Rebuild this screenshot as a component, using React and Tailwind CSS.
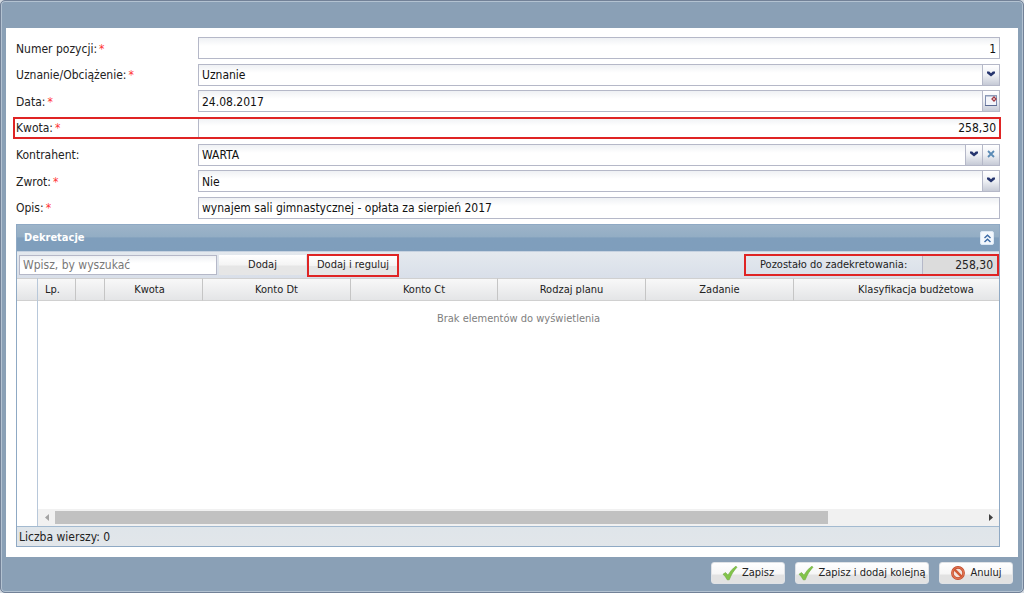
import React, { useState } from 'react';

const columns = [
  { label: 'Lp.', width: 'w-[38px]', padding: 'pr-2' },
  { label: '', width: 'w-[29px]', padding: 'p-0' },
  { label: 'Kwota', width: 'w-[98px]', padding: 'pr-2' },
  { label: 'Konto Dt', width: 'w-[148px]', padding: 'p-0' },
  { label: 'Konto Ct', width: 'w-[147px]', padding: 'p-0' },
  { label: 'Rodzaj planu', width: 'w-[148px]', padding: 'p-0' },
  { label: 'Zadanie', width: 'w-[148px]', padding: 'p-0' },
  { label: 'Klasyfikacja budżetowa', width: 'w-[245px]', padding: 'p-0' },
];

const ChevronIcon = () => (
  <svg width="8" height="6" viewBox="0 0 8 6" className="block">
    <path d="M0 0.500h2.200L4 2.200 5.800 0.500H8v1.700L4 5.500 0 2.200z" fill="#26356e" />
  </svg>
);

const ClearIcon = () => (
  <svg width="8" height="8" viewBox="0 0 8 8" className="block">
    <path d="M1 1l6 6M7 1L1 7" stroke="#5b8bb5" strokeWidth="1.8" />
  </svg>
);

const CalendarIcon = () => (
  <svg width="14" height="13" viewBox="0 0 14 13" className="block">
    <rect x="1.5" y="1.5" width="11" height="10" fill="#f4f5fa" stroke="#7f8db0" />
    <path d="M1 1h12v1.500H1z" fill="#8d9bb9" />
    <path d="M1 11.5h12" stroke="#5c6b93" />
    <path d="M10 3l2 2-2 2-2-2z" fill="#fff" stroke="#a33a44" strokeWidth="1.3" />
  </svg>
);

const CheckIcon = () => (
  <svg width="16" height="16" viewBox="0 0 16 16" className="block">
    <path
      d="M1 9.200L3.600 7.600 6 10.200C8 6.600 10.600 3.400 14 1.200L15 2.200C11.800 5.600 9.200 9.600 7.200 14.800H5.200C4.200 12.600 2.800 10.800 1 9.200z"
      fill="#82c44a"
      stroke="#69a838"
      strokeWidth="0.6"
    />
  </svg>
);

const CancelIcon = () => (
  <svg width="16" height="16" viewBox="0 0 16 16" className="block">
    <circle cx="8" cy="8" r="5.6" fill="#f3e4dd" stroke="#c0492a" strokeWidth="2.6" />
    <circle cx="8" cy="8" r="5.6" fill="none" stroke="#e07350" strokeWidth="1.4" />
    <path d="M4.200 4.200l7.600 7.600" stroke="#d05a35" strokeWidth="2.4" />
  </svg>
);

const CollapseIcon = () => (
  <svg width="9" height="9" viewBox="0 0 9 9" className="block">
    <path d="M1.500 4l3-2.800 3 2.800M1.500 8l3-2.800 3 2.800" fill="none" stroke="#3a6aa6" strokeWidth="1.400" />
  </svg>
);

const inputClass = 'min-w-0 flex-1 self-stretch appearance-none bg-transparent px-[3px] pt-px text-[#111] outline-none';
const triggerClass =
  'flex w-[17px] shrink-0 items-center justify-center self-stretch border-l border-[#b5b8c8] bg-linear-to-b from-white via-[#eef0f4] to-[#c6cad6] pb-[2px]';
const toolbarButtonClass =
  'bg-linear-to-b from-white from-0% via-[#f4f4f4] via-50% to-[#e6e6e6] to-55% text-[11px] text-[#222]';

const FieldRow = ({ id, label, required = true, highlighted = false, children }) => (
  <div
    className={
      highlighted
        ? '-ml-[3px] -mr-[1px] flex items-center pl-[3px] pr-[1px] outline-2 -outline-offset-2 outline-[#df2424]'
        : 'flex items-center'
    }
  >
    <label htmlFor={id} className="w-[182px] shrink-0 pt-px text-[#222]">
      {label}:{required && <span className="ml-[2px] text-[#f33]">*</span>}
    </label>
    <div className="flex h-[22px] min-w-0 flex-1 items-center border border-[#b5b8c8] bg-linear-to-b from-[#eff1f4] to-white to-40%">
      {children}
    </div>
  </div>
);

const FooterButton = ({ icon, children, className }) => (
  <button
    type="button"
    className={`flex h-[22px] items-center justify-center gap-1 rounded-[3px] border border-[#dfe2e6] bg-linear-to-b from-white from-0% via-[#f6f6f6] via-55% to-[#e2e2e2] to-60% text-[11px] text-[#222] ${className}`}
  >
    {icon}
    {children}
  </button>
);

const DecreesPanel = () => {
  const [search, setSearch] = useState('');

  return (
    <section className="mt-[5px] flex flex-1 flex-col border border-[#8fa9c4]">
      <header className="flex h-[26px] shrink-0 items-center justify-between bg-linear-to-b from-[#9db4c9] from-0% via-[#93adc4] via-45% to-[#7f9ebc] to-50% pl-[7px] pr-[5px]">
        <h2 className="text-[11px] font-bold text-white">Dekretacje</h2>
        <button
          type="button"
          aria-label="Zwiń"
          className="flex size-[14px] items-center justify-center rounded-[2px] border border-[#dbe8f5] bg-[#f3f8fd]"
        >
          <CollapseIcon />
        </button>
      </header>

      <div className="flex h-[27px] shrink-0 items-center border-t border-[#c6d2e0] bg-linear-to-b from-[#e4e9ee] to-[#d9dfe9] pl-[2px]">
        <input
          type="text"
          aria-label="Szukaj"
          placeholder="Wpisz, by wyszukać"
          value={search}
          onChange={(e) => setSearch(e.target.value)}
          className="h-5 w-[198px] border border-[#b5b8c8] bg-linear-to-b from-[#eff1f4] to-white to-40% px-[3px] outline-none placeholder:text-[#777]"
        />
        <button type="button" className={`ml-[2px] h-5 w-[87px] ${toolbarButtonClass}`}>
          Dodaj
        </button>
        <button type="button" className={`ml-[1px] h-[23px] w-[92px] border-2 border-[#df2424] ${toolbarButtonClass}`}>
          Dodaj i reguluj
        </button>
        <div className="ml-auto flex h-[22px] w-[255px] items-center border-2 border-[#df2424]">
          <label htmlFor="remaining" className="flex-1 pl-[14px] text-[11px] text-[#222]">
            Pozostało do zadekretowania:
          </label>
          <input
            id="remaining"
            type="text"
            readOnly
            value="258,30"
            className="w-[75px] self-stretch border-l border-[#b5b8c8] bg-[#dcdcdc] px-1 text-right text-[#222] outline-none"
          />
        </div>
      </div>

      <div className="flex min-h-[200px] flex-1">
        <div className="w-[21px] shrink-0 border-r border-[#b8c8da]">
          <div className="h-[23px] border-y border-[#d0d0d0] bg-linear-to-b from-[#f9f9f9] to-[#e3e4e6]" />
        </div>
        <div className="flex min-w-0 flex-1 flex-col">
          <div className="flex-1 overflow-hidden">
            <table className="w-[1001px] table-fixed border-separate border-spacing-0 text-[11px] text-[#222]">
              <thead>
                <tr className="bg-linear-to-b from-[#f9f9f9] to-[#e3e4e6]">
                  {columns.map((column, i) => (
                    <th
                      key={i}
                      scope="col"
                      className={`h-[23px] border-y border-r border-[#d0d0d0] border-r-[#c5c5c5] py-0 pl-0 font-normal ${column.width} ${column.padding}`}
                    >
                      {column.label}
                    </th>
                  ))}
                </tr>
              </thead>
            </table>
            <p className="pt-[10px] text-center text-[11px] text-[#808080]">Brak elementów do wyświetlenia</p>
          </div>
          <div className="flex h-[17px] shrink-0 items-center bg-[#f1f1f1]">
            <button type="button" aria-label="Przewiń w lewo" className="flex w-[17px] justify-center">
              <svg width="4" height="7" viewBox="0 0 4 7"><path d="M4 0v7L0 3.5z" fill="#a3a3a3" /></svg>
            </button>
            <div className="flex-1">
              <div className="h-[13px] w-5/6 bg-[#c1c1c1]" />
            </div>
            <button type="button" aria-label="Przewiń w prawo" className="flex w-[17px] justify-center">
              <svg width="4" height="7" viewBox="0 0 4 7"><path d="M0 0v7l4-3.5z" fill="#404040" /></svg>
            </button>
          </div>
        </div>
      </div>

      <div className="flex h-5 shrink-0 items-center border-t border-[#a3bad0] bg-linear-to-b from-[#dfe5ea] to-[#e2e6ea] pt-px pl-[2px] text-[#222]">
        Liczba wierszy: 0
      </div>
    </section>
  );
};

export default function App() {
  const [form, setForm] = useState({
    number: '1',
    side: 'Uznanie',
    date: '24.08.2017',
    amount: '258,30',
    contractor: 'WARTA',
    refund: 'Nie',
    description: 'wynajem sali gimnastycznej - opłata za sierpień 2017',
  });

  const update = (key) => (e) => {
    const value = e.target.value;
    setForm(prev => ({ ...prev, [key]: value }));
  };

  return (
    <div className="flex min-h-screen flex-col bg-[#d5dbe2] font-['DejaVu_Sans_Condensed','DejaVu_Sans',sans-serif] text-[12px] leading-4">
      <div className="flex flex-1 flex-col rounded-[5px] border border-[#728197] bg-[#8aa0b6] shadow-[inset_0_0_0_1px_#b3c2d1]">
        <div className="h-[27px] shrink-0" />
        <main className="mx-[5px] flex flex-1 flex-col bg-white pt-[9px] pr-[18px] pb-[10px] pl-[10px]">
          <form className="flex h-[182px] shrink-0 flex-col justify-between" onSubmit={(e) => e.preventDefault()}>
            <FieldRow id="number" label="Numer pozycji">
              <input id="number" type="text" value={form.number} onChange={update('number')} className={`${inputClass} text-right`} />
            </FieldRow>
            <FieldRow id="side" label="Uznanie/Obciążenie">
              <select id="side" value={form.side} onChange={update('side')} className={inputClass}>
                <option>Uznanie</option>
                <option>Obciążenie</option>
              </select>
              <span className={triggerClass}><ChevronIcon /></span>
            </FieldRow>
            <FieldRow id="date" label="Data">
              <input id="date" type="text" value={form.date} onChange={update('date')} className={inputClass} />
              <button type="button" aria-label="Kalendarz" className={triggerClass}><CalendarIcon /></button>
            </FieldRow>
            <FieldRow id="amount" label="Kwota" highlighted>
              <input id="amount" type="text" value={form.amount} onChange={update('amount')} className={`${inputClass} text-right`} />
            </FieldRow>
            <FieldRow id="contractor" label="Kontrahent" required={false}>
              <select id="contractor" value={form.contractor} onChange={update('contractor')} className={inputClass}>
                <option value="" />
                <option>WARTA</option>
              </select>
              <span className={triggerClass}><ChevronIcon /></span>
              <button
                type="button"
                aria-label="Wyczyść"
                className={triggerClass}
                onClick={() => setForm(prev => ({ ...prev, contractor: '' }))}
              >
                <ClearIcon />
              </button>
            </FieldRow>
            <FieldRow id="refund" label="Zwrot">
              <select id="refund" value={form.refund} onChange={update('refund')} className={inputClass}>
                <option>Nie</option>
                <option>Tak</option>
              </select>
              <span className={triggerClass}><ChevronIcon /></span>
            </FieldRow>
            <FieldRow id="description" label="Opis">
              <input id="description" type="text" value={form.description} onChange={update('description')} className={inputClass} />
            </FieldRow>
          </form>
          <DecreesPanel />
        </main>
        <footer className="flex h-[35px] shrink-0 items-start justify-end gap-[10px] pt-[5px] pr-[10px]">
          <FooterButton icon={<CheckIcon />} className="w-[74px]">Zapisz</FooterButton>
          <FooterButton icon={<CheckIcon />} className="w-[134px]">Zapisz i dodaj kolejną</FooterButton>
          <FooterButton icon={<CancelIcon />} className="w-[74px]">Anuluj</FooterButton>
        </footer>
      </div>
    </div>
  );
}
